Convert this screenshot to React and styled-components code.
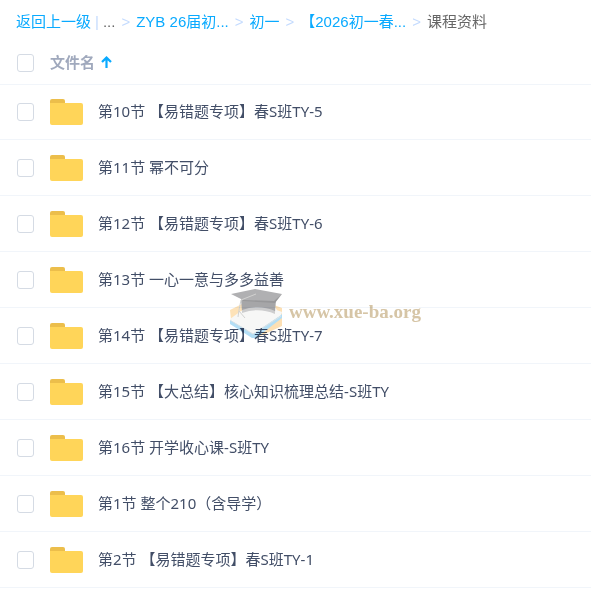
import { useState } from 'react';
import styled, { createGlobalStyle } from 'styled-components';

const GlobalStyle = createGlobalStyle`
  * {
    box-sizing: border-box;
  }

  body {
    margin: 0;
    background-color: #fff;
    font-family: 'Noto Sans', 'Noto Sans CJK SC', sans-serif;
    font-size: 15px;
    color: #424e67;
  }
`;

const Page = styled.main`
  position: relative;
  overflow: hidden;
`;

const Breadcrumb = styled.nav`
  display: flex;
  align-items: center;
  height: 44px;
  padding: 0 16px;
  font-family: 'Liberation Sans', 'Noto Sans CJK SC', sans-serif;
  line-height: 20px;
  white-space: pre;
`;

const Crumb = styled.a`
  color: #09aaff;
  text-decoration: none;

  &:hover {
    text-decoration: underline;
  }
`;

const Divider = styled.span`
  padding: 0 4px;
  color: #c4dbfe;
`;

const Dots = styled.span`
  color: #666;
`;

const Arrow = styled.span`
  padding: 0 6px;
  color: #c4dbfe;
`;

const Current = styled.span`
  color: #666;
`;

const Header = styled.div`
  display: flex;
  align-items: center;
  height: 40px;
  padding: 0 17px 2px;
`;

const Checkbox = styled.input`
  flex: none;
  appearance: none;
  width: 17px;
  height: 18px;
  margin: 0 16px 0 0;
  border: 1px solid #d5dbe4;
  border-radius: 3px;
  background-color: #fff;
  cursor: pointer;

  &:checked {
    border-color: #09aaff;
    background-color: #09aaff;
  }
`;

const SortButton = styled.button`
  display: flex;
  align-items: center;
  gap: 6px;
  padding: 0 0 2px;
  border: none;
  background: none;
  color: #a0a9bd;
  font-family: inherit;
  font-size: 15px;
  font-weight: 700;
  line-height: 20px;
  cursor: pointer;
`;

const List = styled.ul`
  margin: 0;
  padding: 0;
  border-top: 1px solid #f1f5fa;
  list-style: none;
`;

const Row = styled.li`
  display: flex;
  align-items: center;
  height: 56px;
  padding: 1px 17px 0;
  border-bottom: 1px solid #f1f5fa;

  &:first-child {
    height: 55px;
    padding-top: 0;
  }
`;

const FileName = styled.label`
  margin-left: 15px;
  padding-bottom: 2px;
  line-height: 20px;
  white-space: pre;
  cursor: pointer;
`;

const Watermark = styled.div`
  position: absolute;
  top: 288px;
  left: 228px;
  display: flex;
  align-items: center;
  gap: 5px;
  color: #d6c5a6;
  font-family: 'Liberation Serif', serif;
  font-size: 19px;
  font-weight: 700;
  line-height: 20px;
  mix-blend-mode: multiply;
  pointer-events: none;
`;

const WatermarkText = styled.span`
  padding-bottom: 4px;
`;

const crumbs = ['ZYB 26届初...', '初一', '【2026初一春...'];

const files = [
  '第10节 【易错题专项】春S班TY-5',
  '第11节 幂不可分',
  '第12节 【易错题专项】春S班TY-6',
  '第13节 一心一意与多多益善',
  '第14节 【易错题专项】春S班TY-7',
  '第15节 【大总结】核心知识梳理总结-S班TY',
  '第16节 开学收心课-S班TY',
  '第1节 整个210（含导学）',
  '第2节 【易错题专项】春S班TY-1',
];

function FolderIcon() {
  return (
    <svg width="33" height="26" viewBox="0 0 33 26" aria-hidden="true">
      <path d="M0 8V2a2 2 0 0 1 2-2h11a2 2 0 0 1 2 2v6z" fill="#ecbe4b" />
      <path d="M0 4h31a2 2 0 0 1 2 2v18a2 2 0 0 1-2 2H2a2 2 0 0 1-2-2z" fill="#ffd559" />
    </svg>
  );
}

function SortIcon() {
  return (
    <svg width="11" height="12" viewBox="0 0 11 12" aria-hidden="true">
      <path d="M5.5 12V2M1 6L5.5 1.6L10 6" fill="none" stroke="#09aaff" strokeWidth="2.2" />
    </svg>
  );
}

function GraduationIcon() {
  return (
    <svg width="56" height="52" viewBox="0 0 56 52" aria-hidden="true">
      <path d="M2 22L14 16L15 26L3 32z" fill="#fde2b8" />
      <path d="M46 17L54 20V38L28 50L30 42L52 28z" fill="#fde0b4" />
      <path d="M2 32L25 45L54 26V30L28 50H24L2 36z" fill="#b3def5" />
      <path d="M2 31L13 23L46 21L54 24L53 27L25 46z" fill="#f7f7f6" />
      <path d="M2 32L25 46L53 28" fill="none" stroke="#dde2e4" strokeWidth="1" />
      <path d="M13 11L14 23Q30 17 47 24L48 12z" fill="#a6a6a8" />
      <path d="M14 22Q31 16 47 23V26Q31 19 14 25z" fill="#cdcdce" />
      <path d="M3 6L27 1L54 6L46 14L15 12z" fill="#b0b0b2" />
      <path d="M15 12L46 13L54 6L47 15L15 13z" fill="#98989a" />
      <path d="M28 6L13 12L11 22L10 29M11 23L17 30" fill="none" stroke="#d2d2d0" strokeWidth="1" />
    </svg>
  );
}

function App() {
  const [selected, setSelected] = useState([]);

  function toggle(name) {
    setSelected((s) =>
      s.includes(name) ? s.filter((item) => item !== name) : [...s, name]
    );
  }

  return (
    <>
      <GlobalStyle />
      <Page>
        <Breadcrumb>
          <Crumb href="#back">返回上一级</Crumb>
          <Divider>|</Divider>
          <Dots>...</Dots>
          {crumbs.map((crumb) => (
            <span key={crumb}>
              <Arrow>&gt;</Arrow>
              <Crumb href="#folder">{crumb}</Crumb>
            </span>
          ))}
          <Arrow>&gt;</Arrow>
          <Current>课程资料</Current>
        </Breadcrumb>
        <Header>
          <Checkbox
            type="checkbox"
            aria-label="全选"
            checked={selected.length === files.length}
            onChange={(e) => setSelected(e.target.checked ? files : [])}
          />
          <SortButton type="button">
            文件名
            <SortIcon />
          </SortButton>
        </Header>
        <List>
          {files.map((name, i) => (
            <Row key={name}>
              <Checkbox
                type="checkbox"
                id={`file-${i}`}
                checked={selected.includes(name)}
                onChange={() => toggle(name)}
              />
              <FolderIcon />
              <FileName htmlFor={`file-${i}`}>{name}</FileName>
            </Row>
          ))}
        </List>
        <Watermark>
          <GraduationIcon />
          <WatermarkText>www.xue-ba.org</WatermarkText>
        </Watermark>
      </Page>
    </>
  );
}

export default App;
